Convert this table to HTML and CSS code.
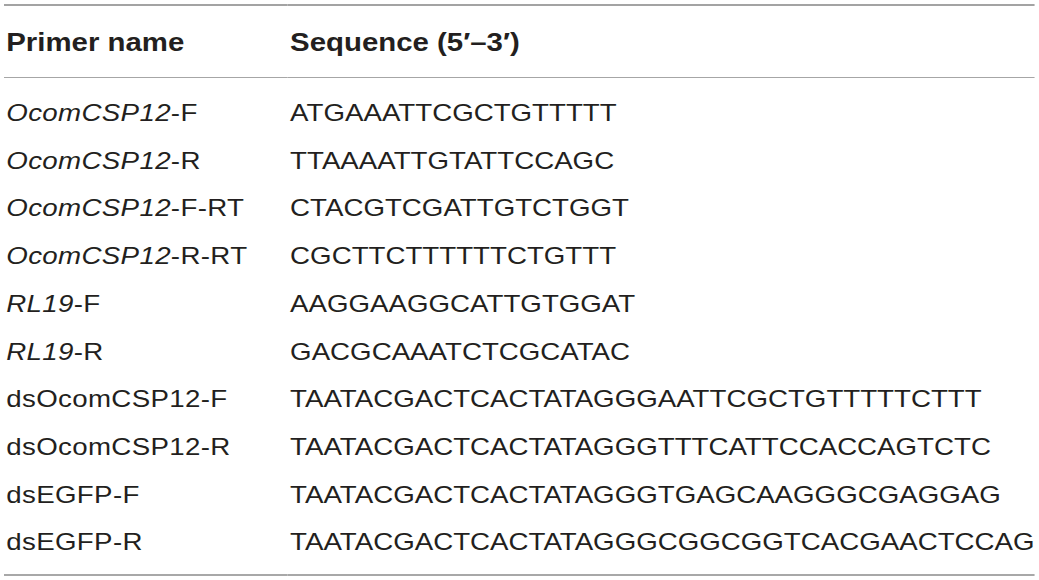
FILE: index.html
```html
<!DOCTYPE html>
<html lang="en">
<head>
<meta charset="utf-8">
<title>Primers</title>
<link rel="stylesheet" href="styles.css">
</head>
<body>
<div class="wrap">
<table class="primers">
  <thead>
    <tr><th class="c1">Primer name</th><th>Sequence (5′–3′)</th></tr>
  </thead>
  <tbody>
    <tr class="first"><td class="name"><i>OcomCSP12</i>-F</td><td>ATGAAATTCGCTGTTTTT</td></tr>
    <tr><td class="name"><i>OcomCSP12</i>-R</td><td>TTAAAATTGTATTCCAGC</td></tr>
    <tr><td class="name"><i>OcomCSP12</i>-F-RT</td><td>CTACGTCGATTGTCTGGT</td></tr>
    <tr><td class="name"><i>OcomCSP12</i>-R-RT</td><td>CGCTTCTTTTTTCTGTTT</td></tr>
    <tr><td class="name"><i>RL19</i>-F</td><td>AAGGAAGGCATTGTGGAT</td></tr>
    <tr><td class="name"><i>RL19</i>-R</td><td>GACGCAAATCTCGCATAC</td></tr>
    <tr><td class="name">dsOcomCSP12-F</td><td>TAATACGACTCACTATAGGGAATTCGCTGTTTTTCTTT</td></tr>
    <tr><td class="name">dsOcomCSP12-R</td><td>TAATACGACTCACTATAGGGTTTCATTCCACCAGTCTC</td></tr>
    <tr><td class="name">dsEGFP-F</td><td>TAATACGACTCACTATAGGGTGAGCAAGGGCGAGGAG</td></tr>
    <tr class="last"><td class="name">dsEGFP-R</td><td>TAATACGACTCACTATAGGGCGGCGGTCACGAACTCCAG</td></tr>
  </tbody>
</table>
</div>
</body>
</html>
```
FILE: styles.css
```css
html, body {
  margin: 0;
  padding: 0;
  background: #ffffff;
}
.wrap {
  padding: 4px 0 0 4px;
}
.primers {
  width: 912px;
  border-collapse: collapse;
  font-family: "Liberation Sans", Arial, Helvetica, sans-serif;
  color: #231f20;
  transform: scaleX(1.13);
  transform-origin: 0 0;
  border-top: 2px solid #a3a3a3;
  border-bottom: 2px solid #a8a8a8;
}
.primers th {
  text-align: left;
  font-weight: bold;
  font-size: 26px;
  line-height: 30px;
  padding: 21px 0 20px 2px;
  border-bottom: 1.5px solid #a6a6a6;
  white-space: nowrap;
}
.primers th.c1 {
  width: 250px;
}
.primers td {
  font-size: 24.5px;
  line-height: 47.7px;
  padding: 0 0 0 2px;
  white-space: nowrap;
  vertical-align: top;
}
.primers td.name {
  letter-spacing: 0.3px;
}
.primers tr.first td {
  padding-top: 11px;
}
.primers tr.last td {
  padding-bottom: 8px;
}
.primers i {
  font-style: italic;
}
```
